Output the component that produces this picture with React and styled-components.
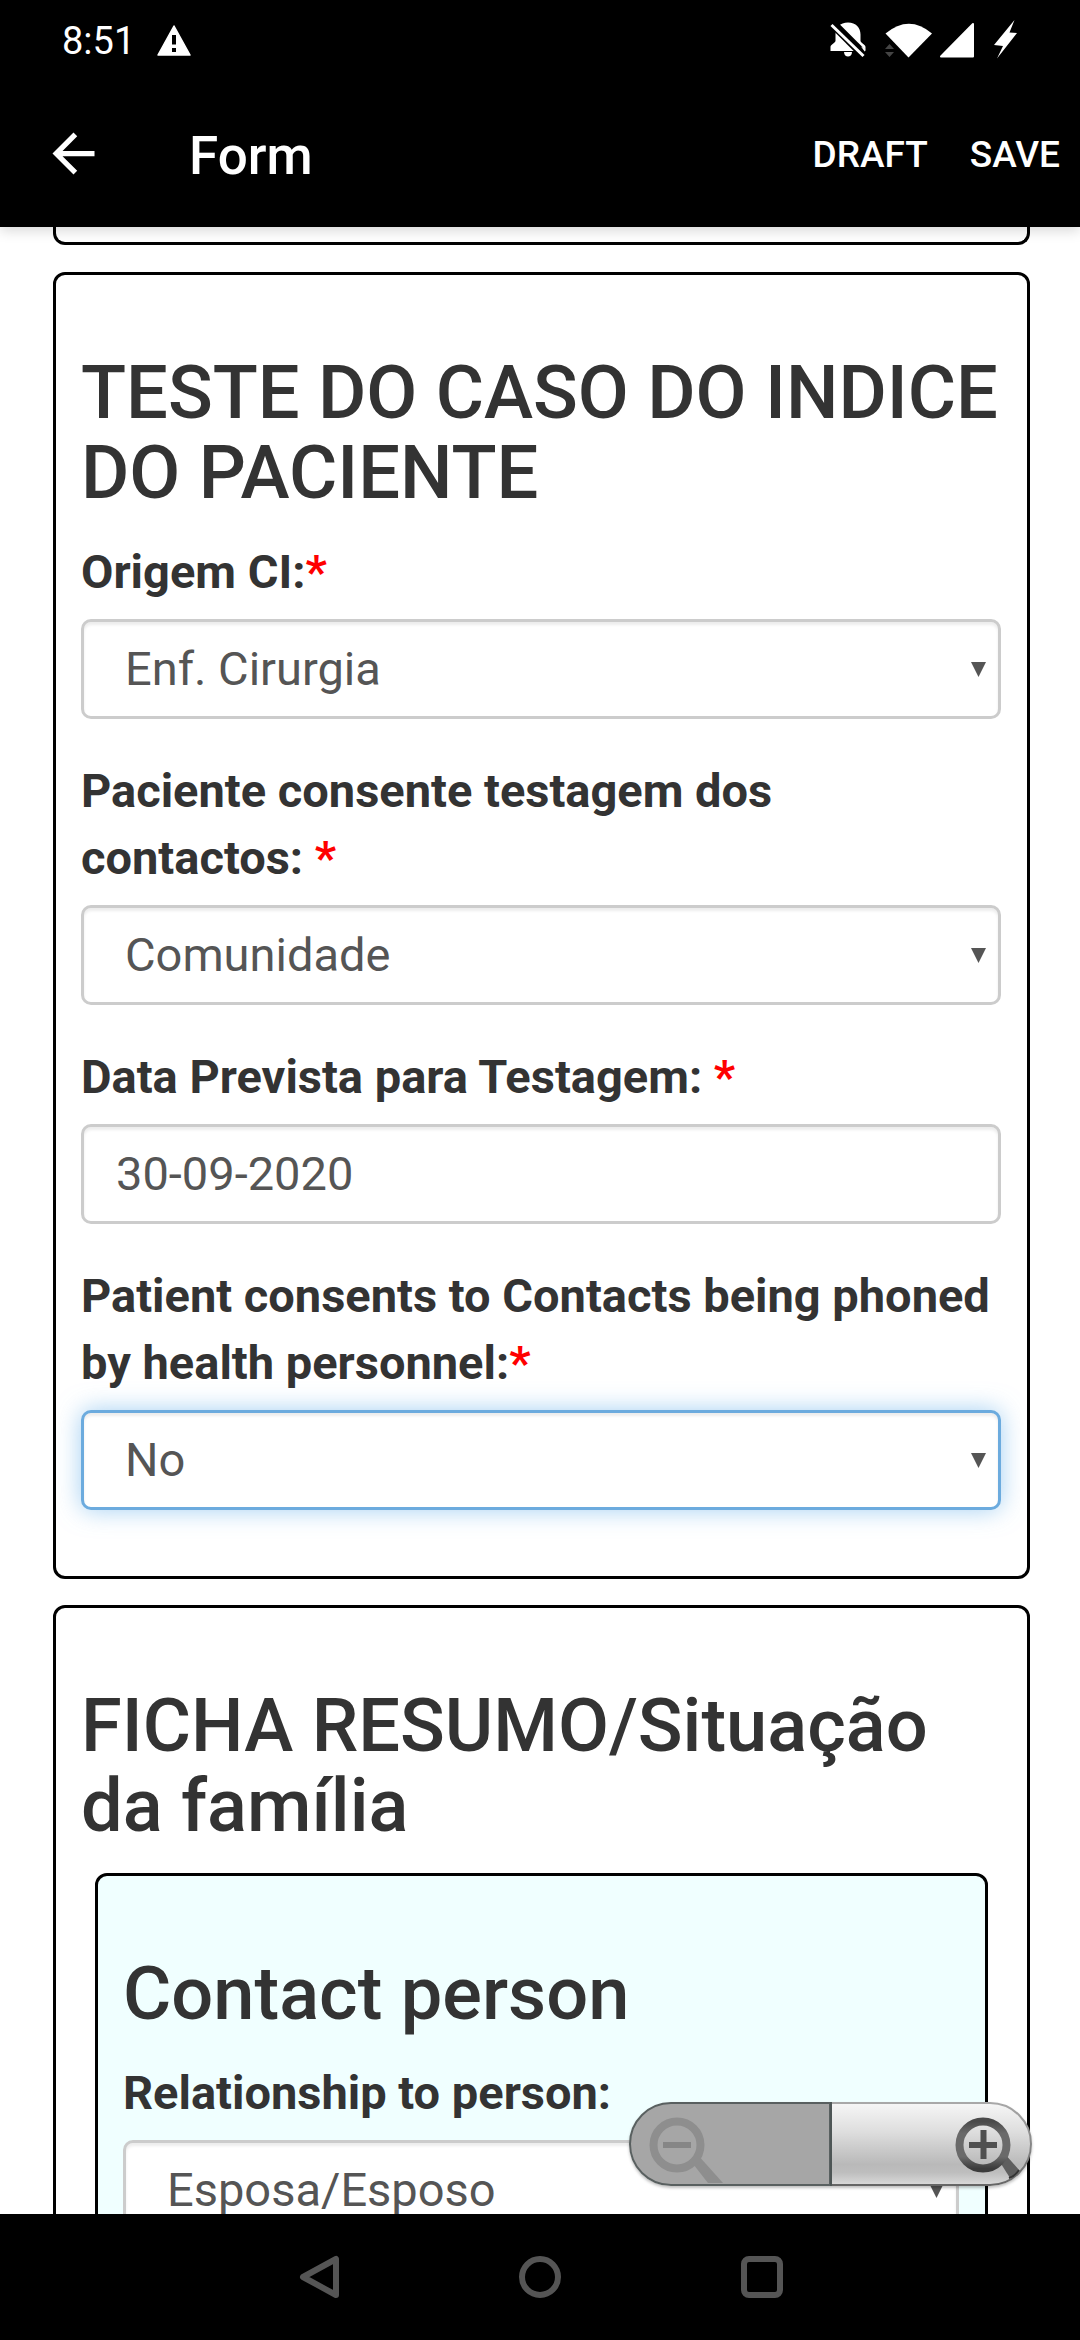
import { useState } from "react";
import styled, { createGlobalStyle } from "styled-components";
import { MdArrowBack } from "react-icons/md";

const SelectItem = ({ id, label, required, options, focused }) => {
  const [value, setValue] = useState(options[0]);

  return (
    <Field>
      <Label htmlFor={id}>
        {label}
        {required ? <LabelRequire>*</LabelRequire> : null}
      </Label>
      <SelectWrapper>
        <Select
          id={id}
          value={value}
          onChange={e => setValue(e.target.value)}
          $focused={focused}
        >
          {options.map(option => (
            <option key={option}>{option}</option>
          ))}
        </Select>
        <Caret viewBox="0 0 15 15" aria-hidden="true">
          <path d="M0 0h15L7.5 15z" />
        </Caret>
      </SelectWrapper>
    </Field>
  );
};

const InputItem = ({ id, label, required, defaultValue }) => (
  <Field>
    <Label htmlFor={id}>
      {label}
      {required ? <LabelRequire>*</LabelRequire> : null}
    </Label>
    <Input id={id} type="text" defaultValue={defaultValue} />
  </Field>
);

const StatusIcons = () => (
  <IconRow>
    <svg width="49" height="40" viewBox="0 0 49 40" aria-hidden="true">
      <path
        d="M18 2.5c-8 0-12.5 5-12.5 12v6.5c0 1.5-5 3.5-5 6v4h35v-4c0-2.5-5-4.5-5-6v-6.5c0-7-4.5-12-12.5-12z"
        fill="#fff"
      />
      <path d="M14 32h8c0 6-8 6-8 0z" fill="#fff" />
      <path d="M-1 0L35 36" stroke="#000" strokeWidth="9" />
      <path d="M1.5 5L33.5 36" stroke="#fff" strokeWidth="3" />
      <path d="M31 26.5c2 .8 4.5 2 4.5 4l-.8 1z" fill="#fff" />
    </svg>
    <svg width="48" height="40" viewBox="0 0 48 40" aria-hidden="true">
      <path d="M.5 13.5Q24-6 47 13.5L23.5 37.5z" fill="#fff" />
      <path d="M0 29l4.5-5 4.5 5zM0 32h9l-4.5 5z" fill="#444" />
    </svg>
    <svg width="36" height="40" viewBox="0 0 36 40" aria-hidden="true">
      <path
        d="M34 4v32.5H2z"
        fill="#fff"
        stroke="#fff"
        strokeWidth="2"
        strokeLinejoin="round"
      />
    </svg>
    <svg width="38" height="40" viewBox="0 0 38 40" aria-hidden="true">
      <path d="M33.5 0l-20.5 25 9 1-6 12.5L36 13l-7.5-.5z" fill="#fff" />
    </svg>
  </IconRow>
);

const ZoomControls = () => (
  <ZoomBar>
    <ZoomButton type="button" aria-label="Zoom out" disabled>
      <svg width="201" height="84" viewBox="0 0 201 84">
        <path d="M201 1H42a41 41 0 0 0 0 82h159z" fill="#a6a6a6" stroke="#596060" strokeWidth="2" />
        <path d="M61 58l7-6L94 81H79z" fill="#8e8e8e" />
        <circle cx="48" cy="43" r="23.5" fill="none" stroke="#8e8e8e" strokeWidth="8" />
        <path d="M34 43h28" stroke="#868686" strokeWidth="6" />
      </svg>
    </ZoomButton>
    <ZoomButton type="button" aria-label="Zoom in">
      <svg width="202" height="84" viewBox="0 0 202 84">
        <defs>
          <linearGradient id="zoomFill" x1="0" y1="0" x2="0" y2="1">
            <stop offset="0" stopColor="#f6f6f6" />
            <stop offset=".35" stopColor="#dedede" />
            <stop offset=".75" stopColor="#b9b9b9" />
            <stop offset=".85" stopColor="#bebebe" />
            <stop offset="1" stopColor="#dadada" />
          </linearGradient>
          <linearGradient id="zoomEdge" x1="0" y1="0" x2="0" y2="1">
            <stop offset="0" stopColor="#a8a8a8" />
            <stop offset="1" stopColor="#666" />
          </linearGradient>
          <linearGradient id="zoomRing" x1="0" y1="0" x2="0" y2="1">
            <stop offset="0" stopColor="#4a4a4a" />
            <stop offset=".25" stopColor="#6a6a6a" />
            <stop offset=".75" stopColor="#6a6a6a" />
            <stop offset="1" stopColor="#3c3c3c" />
          </linearGradient>
        </defs>
        <path d="M0 1h160a41 41 0 0 1 0 82H0z" fill="url(#zoomFill)" stroke="url(#zoomEdge)" strokeWidth="2" />
        <path d="M0 0v84" stroke="#4e5656" strokeWidth="4" />
        <path d="M168 57l6-6 15 17-9 8z" fill="#5e5e5e" />
        <path d="M179 76q6-2 10-8" fill="none" stroke="#333" strokeWidth="2" />
        <circle cx="153" cy="43" r="23.5" fill="none" stroke="url(#zoomRing)" strokeWidth="8" />
        <path d="M139 43h28M153.5 28v29" stroke="#505050" strokeWidth="6" />
      </svg>
    </ZoomButton>
  </ZoomBar>
);

const App = () => (
  <Screen>
    <GlobalStyle />
    <Header>
      <StatusBar>
        <Clock>8:51</Clock>
        <svg width="34" height="31" viewBox="0 0 34 31" aria-hidden="true">
          <path
            d="M17 1L33 30H1z"
            fill="#fff"
            stroke="#fff"
            strokeWidth="1.5"
            strokeLinejoin="round"
          />
          <path d="M15 10h4v9.5h-4zM15 23h4v4h-4z" fill="#000" />
        </svg>
        <StatusIcons />
      </StatusBar>
      <Toolbar>
        <BackButton type="button" aria-label="Back">
          <MdArrowBack size={63} />
        </BackButton>
        <Title>Form</Title>
        <Action type="button">DRAFT</Action>
        <Action type="button">SAVE</Action>
      </Toolbar>
    </Header>

    <Body>
      <Scroller>
        <SectionEnd />
        <Section>
          <Heading>TESTE DO CASO DO INDICE DO PACIENTE</Heading>
          <SelectItem id="origem" label="Origem CI:" required options={["Enf. Cirurgia"]} />
          <SelectItem
            id="consente"
            label="Paciente consente testagem dos contactos: "
            required
            options={["Comunidade"]}
          />
          <InputItem
            id="data"
            label="Data Prevista para Testagem: "
            required
            defaultValue="30-09-2020"
          />
          <SelectItem
            id="phoned"
            label="Patient consents to Contacts being phoned by health personnel:"
            required
            focused
            options={["No"]}
          />
        </Section>
        <Section>
          <Heading>FICHA RESUMO/Situação da família</Heading>
          <SubSection>
            <Heading>Contact person</Heading>
            <SelectItem
              id="relationship"
              label="Relationship to person:"
              options={["Esposa/Esposo"]}
            />
          </SubSection>
        </Section>
      </Scroller>
      <ZoomControls />
    </Body>

    <NavBar>
      <NavButton type="button" aria-label="Back">
        <svg width="48" height="48" viewBox="0 0 48 48">
          <path d="M42 6v36L9 24z" />
        </svg>
      </NavButton>
      <NavButton type="button" aria-label="Home">
        <svg width="48" height="48" viewBox="0 0 48 48">
          <circle cx="24" cy="24" r="18" />
        </svg>
      </NavButton>
      <NavButton type="button" aria-label="Recent apps">
        <svg width="48" height="48" viewBox="0 0 48 48">
          <rect x="6" y="6" width="36" height="36" rx="5" />
        </svg>
      </NavButton>
    </NavBar>
  </Screen>
);

export default App;

const GlobalStyle = createGlobalStyle`
  * {
    box-sizing: border-box;
  }
  body {
    margin: 0;
    background: #fff;
    color: #333;
    font-family: Roboto, "Liberation Sans", sans-serif;
  }
  button, input, select {
    font-family: inherit;
  }
  svg {
    display: block;
  }
`;

const Screen = styled.div`
  display: flex;
  flex-direction: column;
  height: 100vh;
`;

const Header = styled.header`
  position: relative;
  z-index: 1;
  background: #000;
  color: #fff;
  box-shadow: 0 4px 12px rgba(0, 0, 0, 0.15);
`;

const StatusBar = styled.div`
  display: flex;
  align-items: center;
  height: 80px;
  padding: 0 61px 0 62px;
`;

const Clock = styled.span`
  margin-right: 22px;
  padding-top: 2px;
  font-size: 38px;
  line-height: 48px;
`;

const IconRow = styled.div`
  display: flex;
  gap: 6px;
  margin-left: auto;
`;

const Toolbar = styled.div`
  display: flex;
  align-items: center;
  height: 147px;
  padding: 0 20px 0 42px;
`;

const BackButton = styled.button`
  padding: 0;
  border: 0;
  background: none;
  color: #fff;
`;

const Title = styled.h1`
  flex: 1;
  margin: 0 0 0 84px;
  padding-top: 4px;
  font-size: 53px;
  font-weight: 500;
  line-height: 64px;
`;

const Action = styled.button`
  margin-left: 42px;
  padding: 2px 0 0;
  border: 0;
  background: none;
  color: #fff;
  font-size: 37px;
  font-weight: 500;
  line-height: 48px;
`;

const Body = styled.main`
  position: relative;
  flex: 1;
  min-height: 0;
`;

const Scroller = styled.div`
  height: 100%;
  padding: 0 50px 0 53px;
  overflow-y: auto;
  scrollbar-width: none;
`;

const Section = styled.section`
  margin-bottom: 26px;
  padding: 78px 26px 28px 25px;
  border: 3px solid #000;
  border-radius: 12px;
`;

// tail of the section that is scrolled out of view
const SectionEnd = styled.div`
  height: 18px;
  margin-bottom: 27px;
  border: 3px solid #000;
  border-top: 0;
  border-radius: 0 0 12px 12px;
`;

const SubSection = styled(Section)`
  margin: 27px 13px 26px 14px;
  background: #f0ffff;
`;

const Heading = styled.h3`
  margin: 0 0 25px;
  font-size: 74px;
  font-weight: 500;
  line-height: 80px;
`;

const Field = styled.div`
  margin-bottom: 38px;
`;

const Label = styled.label`
  display: block;
  margin-bottom: 14px;
  font-size: 47px;
  font-weight: 700;
  line-height: 67px;
`;

const LabelRequire = styled.span`
  color: #f00;
`;

const SelectWrapper = styled.div`
  position: relative;
`;

const Input = styled.input`
  display: block;
  width: 100%;
  height: 100px;
  padding: 0 32px 2px;
  border: 3px solid #ccc;
  border-radius: 10px;
  outline: none;
  background: #fff;
  box-shadow: inset 0 3px 3px rgba(0, 0, 0, 0.075);
  color: #555;
  font-size: 47px;
`;

const Select = styled(Input).attrs({ as: "select" })`
  appearance: none;
  padding: 0 41px 2px;
  border-color: ${props => (props.$focused ? "#6cabde" : "#ccc")};
  box-shadow: inset 0 3px 3px rgba(0, 0, 0, 0.075)
    ${props => (props.$focused ? ", 0 0 24px rgba(102, 175, 233, 0.6)" : "")};
`;

const Caret = styled.svg`
  position: absolute;
  top: 43px;
  right: 15px;
  width: 15px;
  height: 15px;
  fill: #555;
  pointer-events: none;
`;

const ZoomBar = styled.div`
  position: absolute;
  right: 48px;
  bottom: 28px;
  display: flex;
  border-radius: 42px;
  box-shadow: 0 2px 3px rgba(0, 0, 0, 0.25);
`;

const ZoomButton = styled.button`
  padding: 0;
  border: 0;
  background: none;
`;

const NavBar = styled.nav`
  display: flex;
  justify-content: center;
  height: 126px;
  background: #000;
`;

const NavButton = styled.button`
  display: flex;
  align-items: center;
  justify-content: center;
  width: 222px;
  padding: 0;
  border: 0;
  background: none;

  svg {
    fill: none;
    stroke: #555;
    stroke-width: 6px;
    stroke-linejoin: round;
  }
`;
